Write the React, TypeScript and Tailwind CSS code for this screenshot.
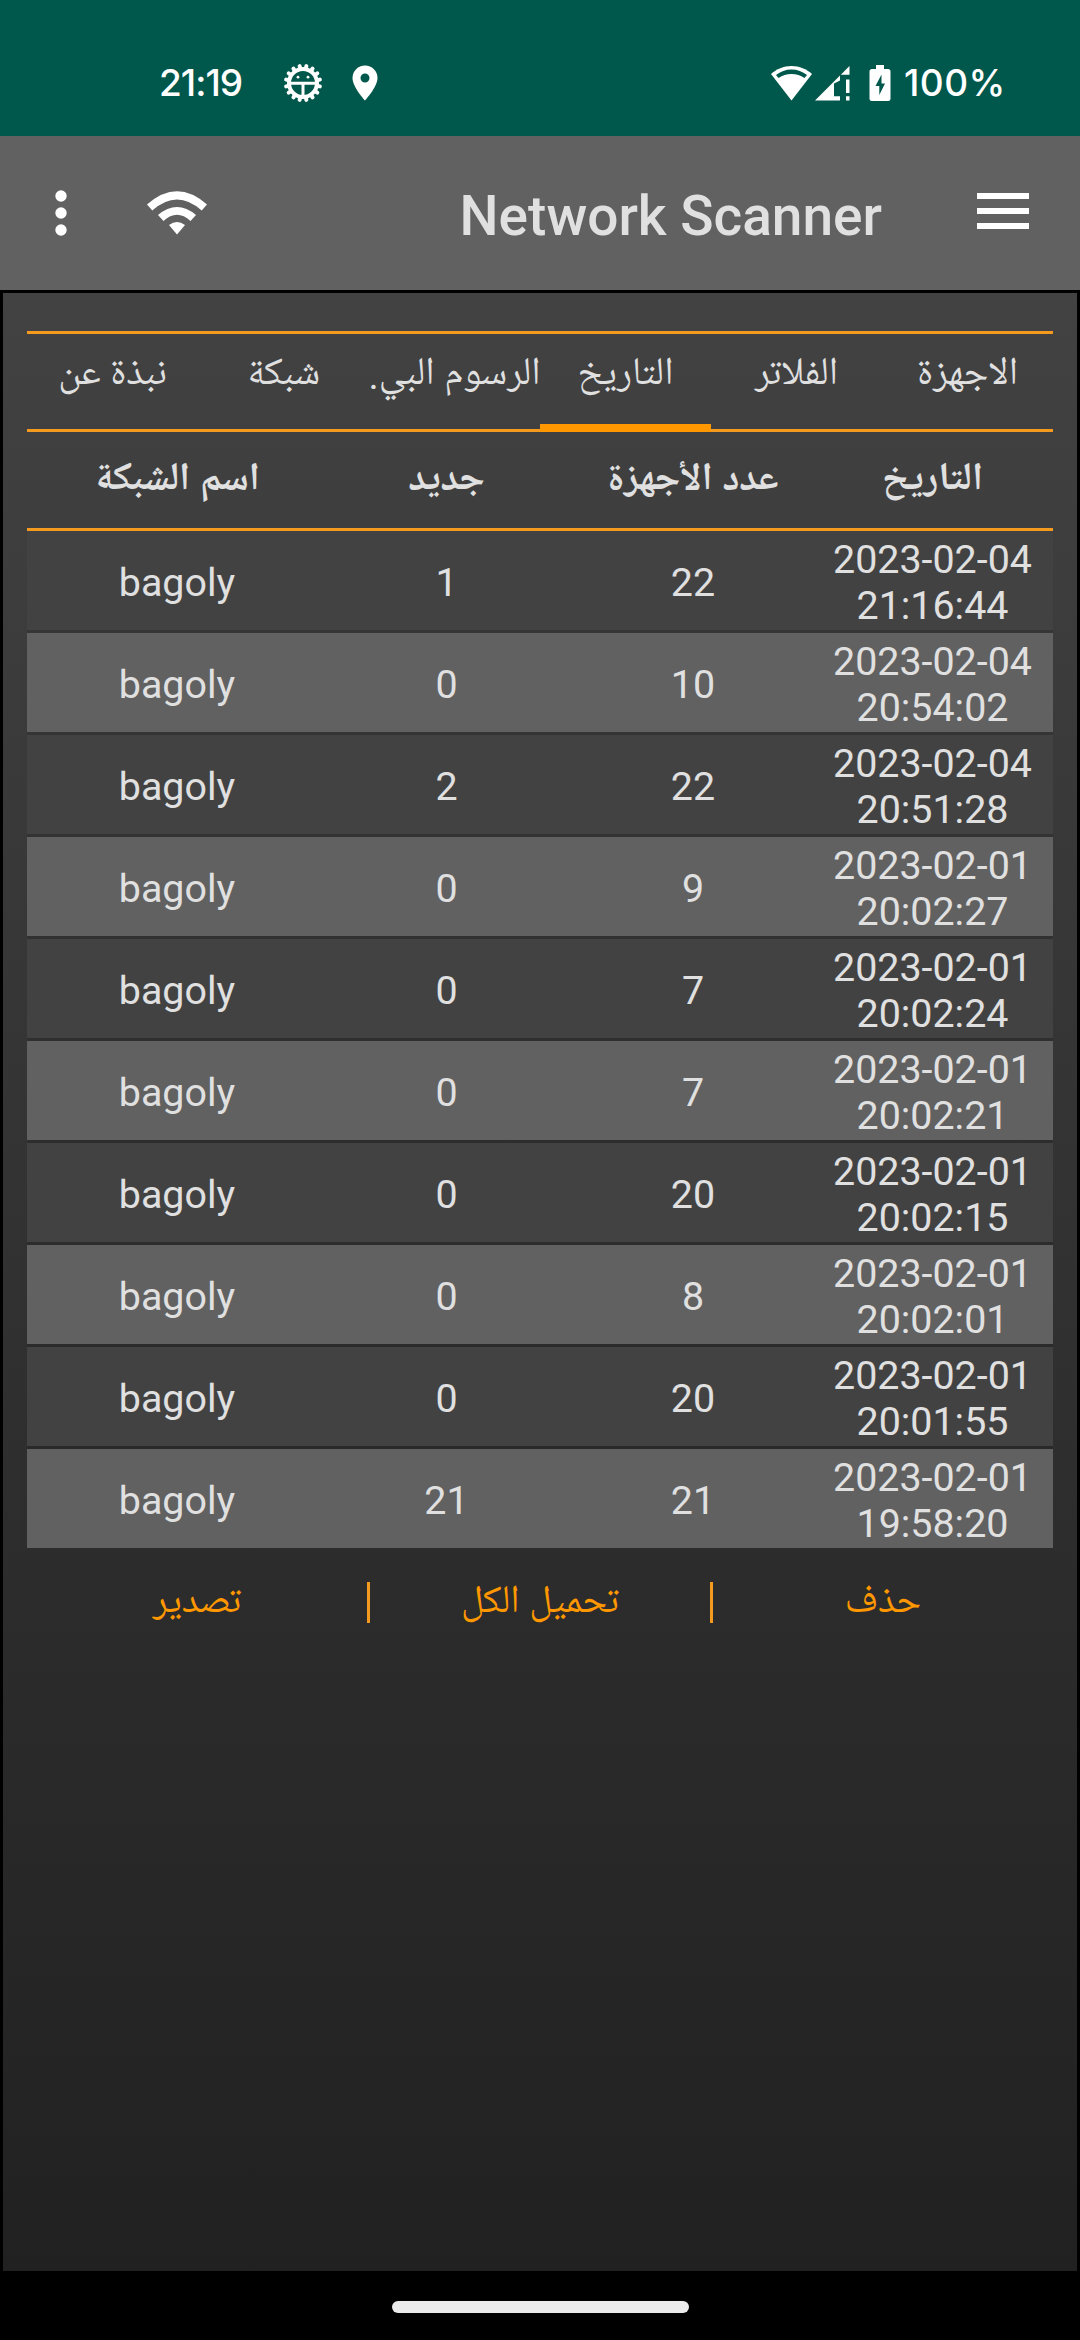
import React from 'react';

const tabs = ['الاجهزة', 'الفلاتر', 'التاريخ', 'الرسوم البي.', 'شبكة', 'نبذة عن'];
const activeTab = 2;

const columns = ['التاريخ', 'عدد الأجهزة', 'جديد', 'اسم الشبكة'];

const history = [
  { date: '2023-02-04', time: '21:16:44', devices: 22, fresh: 1, network: 'bagoly' },
  { date: '2023-02-04', time: '20:54:02', devices: 10, fresh: 0, network: 'bagoly' },
  { date: '2023-02-04', time: '20:51:28', devices: 22, fresh: 2, network: 'bagoly' },
  { date: '2023-02-01', time: '20:02:27', devices: 9, fresh: 0, network: 'bagoly' },
  { date: '2023-02-01', time: '20:02:24', devices: 7, fresh: 0, network: 'bagoly' },
  { date: '2023-02-01', time: '20:02:21', devices: 7, fresh: 0, network: 'bagoly' },
  { date: '2023-02-01', time: '20:02:15', devices: 20, fresh: 0, network: 'bagoly' },
  { date: '2023-02-01', time: '20:02:01', devices: 8, fresh: 0, network: 'bagoly' },
  { date: '2023-02-01', time: '20:01:55', devices: 20, fresh: 0, network: 'bagoly' },
  { date: '2023-02-01', time: '19:58:20', devices: 21, fresh: 21, network: 'bagoly' },
];

const BugIcon: React.FC = () => {
  const teeth = Array.from({ length: 16 }, (_, i) => (i * 360) / 16 + 11.25);
  return (
    <svg className="w-10 h-10" viewBox="0 0 40 40" fill="none" stroke="#fff">
      <circle cx="20" cy="20" r="14" strokeWidth="4" />
      {teeth.map((a) => (
        <path key={a} d="M20 5V2.8" strokeWidth="4" strokeLinecap="round" transform={`rotate(${a} 20 20)`} />
      ))}
      <path d="M7 20.2h26M20 20v13" strokeWidth="3" />
      <circle cx="15" cy="14.2" r="1.4" fill="#fff" stroke="none" />
      <circle cx="25" cy="14.2" r="1.4" fill="#fff" stroke="none" />
    </svg>
  );
};

const StatusBar: React.FC = () => (
  <div className="h-[136px] bg-[#00574b] text-white flex items-center pt-[30px] pl-[159px] pr-[78px] font-['Inter'] font-medium text-[37px]">
    <span className="w-[84px] tracking-[-1px] whitespace-nowrap">21:19</span>
    <span className="ml-[40px]">
      <BugIcon />
    </span>
    <svg className="ml-[29px] w-[26px] h-[36px]" viewBox="0 0 26 36">
      <path d="M13 0.5C6 0.5 0.5 6 0.5 13c0 9 12.5 22.5 12.5 22.5S25.5 22 25.5 13C25.5 6 20 0.5 13 0.5zm0 17a4.5 4.5 0 1 1 0-9 4.5 4.5 0 0 1 0 9z" fill="#fff" />
    </svg>
    <svg className="ml-auto w-[41px] h-[35px]" viewBox="0 0 41 35">
      <path d="M20.5 0C12.5 0 5.5 3 0 8L20.5 34.5 41 8C35.5 3 28.5 0 20.5 0z" fill="#fff" />
      <path d="M5 9C9.5 5.5 14.7 3.5 20.5 3.5S31.5 5.5 36 9L33.5 12C29.5 9.5 25.5 8 20.5 8S11.5 9.5 7.5 12z" fill="#00574b" />
    </svg>
    <svg className="ml-[3px] w-[35px] h-[35px]" viewBox="0 0 35 35" fill="#fff">
      <path d="M34.5 0v8.7h-8.7z" />
      <path d="M25 9.5v5l-6 3v12.8h6v4.2H0z" />
      <path d="M31 13.5h3.5V27H31zM31 30.3h3.5v4.2H31z" />
    </svg>
    <svg className="ml-[19px] w-[22px] h-[36px]" viewBox="0 0 22 36">
      <path d="M7 0h8v4h4a2.5 2.5 0 0 1 2.5 2.5v27A2.5 2.5 0 0 1 19 36H3a2.5 2.5 0 0 1-2.5-2.500v-27A2.5 2.5 0 0 1 3 4h4z" fill="#fff" />
      <path d="M12.5 9.5L6.5 21h3.800v9L16 18.500h-3.500z" fill="#00574b" />
    </svg>
    <span className="ml-[13px] w-[98px] tracking-[0.5px] whitespace-nowrap">100%</span>
  </div>
);

const Toolbar: React.FC = () => (
  <div className="h-[154px] bg-[#616161] flex items-center pl-[55px] pr-[51px]">
    <svg className="w-3 h-[46px]" viewBox="0 0 12 46" fill="#fff">
      <circle cx="6" cy="6" r="5.7" />
      <circle cx="6" cy="23" r="5.7" />
      <circle cx="6" cy="40" r="5.7" />
    </svg>
    <svg className="ml-[80px] w-[60px] h-[44px]" viewBox="0 0 60 44" fill="#fff">
      <path d="M30 43.5l-8-9.500Q30 28 38 34z" />
      <path d="M11 24l5.5 6Q30 17.500 43.500 30L49 24Q30 8 11 24z" />
      <path d="M0 13.5L5.3 19.500Q30-2.500 54.700 19.500L60 13.500Q30-13 0 13.500z" />
    </svg>
    <h1 className="ml-auto mt-[7px] text-[55px] font-medium text-[#e0e0e0] whitespace-nowrap">Network Scanner</h1>
    <svg className="ml-[95px] mb-1 w-[52px] h-9" viewBox="0 0 52 36">
      <path d="M0 3h52M0 18h52M0 33h52" stroke="#fff" strokeWidth="6" />
    </svg>
  </div>
);

const Tabs: React.FC = () => (
  <div className="h-[101px] border-y-3 border-[#f49b1f] grid grid-cols-6 text-[39px]">
    {tabs.map((label, i) => (
      <div key={label} className="relative flex items-center justify-center pb-[10px] whitespace-nowrap">
        {label}
        {i === activeTab && <div className="absolute inset-x-0 -bottom-[3px] h-2 bg-[#ff9800]" />}
      </div>
    ))}
  </div>
);

const rowGrid = 'grid grid-cols-[225px_254px_239px_300px] pr-2 items-center text-center';

const HistoryTable: React.FC = () => (
  <div>
    <div className={`${rowGrid} h-[99px] border-b-3 border-[#f49b1f] pt-1 text-[39px] font-bold`}>
      {columns.map((c) => (
        <div key={c} className="whitespace-nowrap">{c}</div>
      ))}
    </div>
    <div className="flex flex-col gap-[3px] bg-black/10">
      {history.map((h) => (
        <div
          key={h.time}
          className={`${rowGrid} h-[99px] pt-1 odd:bg-[#424242] even:bg-[#616161] text-[39.4px] leading-[46px]`}
        >
          <div dir="ltr">
            {h.date}
            <br />
            {h.time}
          </div>
          <div>{h.devices}</div>
          <div>{h.fresh}</div>
          <div>{h.network}</div>
        </div>
      ))}
    </div>
  </div>
);

const Actions: React.FC = () => (
  <div className="h-[109px] flex items-center text-[39px] text-[#ff9800]">
    <div className="flex-1 pt-[3px] text-center">حذف</div>
    <div className="w-[3px] h-[41px] bg-[#f49b1f]" />
    <div className="flex-1 pt-[3px] text-center">تحميل الكل</div>
    <div className="w-[3px] h-[41px] bg-[#f49b1f]" />
    <div className="flex-1 pt-[3px] text-center">تصدير</div>
  </div>
);

export default function App() {
  return (
    <div className="w-[1080px] h-[2340px] flex flex-col bg-black overflow-hidden font-['Roboto','Noto_Naskh_Arabic_UI','Noto_Naskh_Arabic','Noto_Sans_Arabic','DejaVu_Sans',sans-serif]">
      <StatusBar />
      <Toolbar />
      <main
        dir="rtl"
        className="flex-1 border-3 border-black bg-linear-to-b from-[#424242] to-[#212121] bg-clip-padding px-6 pt-[38px] text-[#e0e0e0]"
      >
        <Tabs />
        <HistoryTable />
        <Actions />
      </main>
      <div className="h-[66px] flex justify-center pt-[27px]">
        <div className="w-[297px] h-3 rounded-full bg-[#ebebeb]" />
      </div>
    </div>
  );
}
